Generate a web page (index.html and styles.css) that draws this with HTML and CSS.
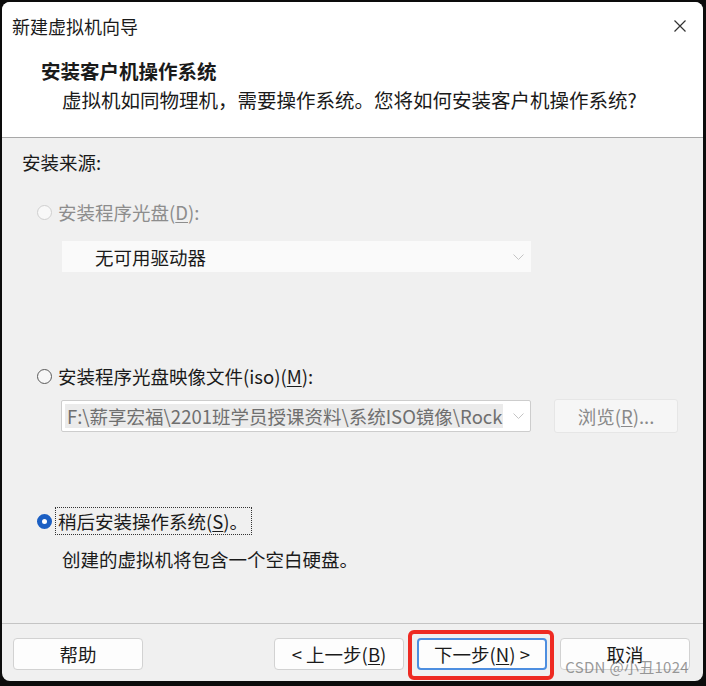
FILE: index.html
```html
<!DOCTYPE html>
<html lang="zh-CN">
<head>
  <meta charset="UTF-8">
  <title>新建虚拟机向导</title>
  <link rel="stylesheet" href="styles.css">
</head>
<body>
  <div class="window">
    <!-- Title bar -->
    <div class="titlebar">
      <span class="title">新建虚拟机向导</span>
      <svg class="close" width="12" height="12" viewBox="0 0 12 12">
        <path d="M0.5 0.5 L11.5 11.5 M11.5 0.5 L0.5 11.5" stroke="#333" stroke-width="1.2" fill="none"/>
      </svg>
    </div>

    <!-- Page header -->
    <div class="header">
      <div class="heading">安装客户机操作系统</div>
      <div class="subtitle">虚拟机如同物理机，需要操作系统。您将如何安装客户机操作系统?</div>
    </div>

    <!-- Options -->
    <div class="content">
      <div class="label">安装来源:</div>

      <div class="radio-row disabled row-disc">
        <span class="radio"></span>
        <span>安装程序光盘(<u>D</u>):</span>
      </div>
      <div class="select">
        <span>无可用驱动器</span>
        <svg width="11" height="6" viewBox="0 0 11 6"><path d="M0.5 0.5 L5.5 5.5 L10.5 0.5" stroke="#c4c4c4" fill="none"/></svg>
      </div>

      <div class="radio-row row-iso">
        <span class="radio"></span>
        <span>安装程序光盘映像文件(iso)(<u>M</u>):</span>
      </div>
      <div class="iso-row">
        <div class="combo">
          <span class="combo-text">F:\薪享宏福\2201班学员授课资料\系统ISO镜像\Rock</span>
          <svg width="11" height="6" viewBox="0 0 11 6"><path d="M0.5 0.5 L5.5 5.5 L10.5 0.5" stroke="#c4c4c4" fill="none"/></svg>
        </div>
        <div class="browse">浏览(<u>R</u>)...</div>
      </div>

      <div class="radio-row row-later">
        <span class="radio checked"></span>
        <span class="focus">稍后安装操作系统(<u>S</u>)。</span>
      </div>
      <div class="desc">创建的虚拟机将包含一个空白硬盘。</div>
    </div>

    <!-- Buttons -->
    <div class="footer">
      <div class="btn">帮助</div>
      <div class="nav">
        <div class="btn">&lt; 上一步(<u>B</u>)</div>
        <div class="btn primary">下一步(<u>N</u>) &gt;
          <span class="highlight"></span>
        </div>
        <div class="btn">取消</div>
      </div>
      <span class="watermark">CSDN @小丑1024</span>
    </div>
  </div>
</body>
</html>
```

FILE: styles.css
```css
html, body {
  margin: 0;
  padding: 0;
}

* {
  box-sizing: border-box;
}

body {
  background-color: #0c0c0c;
  width: 706px;
  height: 686px;
  overflow: hidden;
  font-family: "Noto Sans CJK SC", "Microsoft YaHei", sans-serif;
  font-size: 18.5px;
  line-height: 24px;
  color: #1a1a1a;
}

u {
  text-decoration: underline;
  text-underline-offset: 2px;
  text-decoration-thickness: 1px;
}

.window {
  margin: 2px 3px 0 2px;
  height: 679px;
  border-radius: 8px;
  background-color: #f0f0f0;
  overflow: hidden;
  display: flex;
  flex-direction: column;
}

/* Title bar */
.titlebar {
  height: 48px;
  background-color: #fff;
  display: flex;
  align-items: center;
  justify-content: space-between;
  padding: 0 17px 0 10px;
}
.title {
  font-size: 18px;
}

/* Header */
.header {
  height: 88px;
  background-color: #fff;
  border-bottom: 1px solid #a8a8a8;
  padding-top: 9px;
  font-size: 19.5px;
}
.heading {
  font-weight: bold;
  padding-left: 39px;
  height: 24px;
  margin-bottom: 5px;
}
.subtitle {
  padding-left: 60px;
}

/* Content */
.content {
  flex: 1;
  padding: 12px 0 0 20px;
}
.label {
  height: 24px;
}

.radio-row {
  display: flex;
  align-items: center;
  height: 24px;
  padding-left: 15px;
}
.radio-row.disabled {
  color: #8d8d8d;
}
.row-disc {
  margin-top: 26px;
}
.row-iso {
  margin-top: 92px;
}
.row-later {
  margin-top: 76px;
}

.radio {
  width: 15px;
  height: 15px;
  border-radius: 50%;
  border: 1px solid #5a5a5a;
  background-color: #f7f7f7;
  margin-right: 6px;
  flex-shrink: 0;
}
.disabled .radio {
  border-color: #cfcfcf;
  background-color: #f8f8f8;
}
.radio.checked {
  border: 5px solid #1b5fc3;
  background-color: #fff;
}

.focus {
  outline: 1px dotted #333;
  outline-offset: 1px;
  padding: 0 2px 0 1px;
  margin-left: -1px;
}

.select {
  margin: 17px 0 0 40px;
  width: 469px;
  height: 31px;
  background-color: #fafafa;
  display: flex;
  align-items: center;
  justify-content: space-between;
  padding: 0 7px 0 33px;
}

.iso-row {
  display: flex;
  align-items: center;
  margin: 11px 0 0 39px;
}
.combo {
  width: 470px;
  height: 32px;
  background-color: #fff;
  border: 1px solid #cdcdcd;
  border-radius: 2px;
  display: flex;
  align-items: center;
  justify-content: space-between;
  padding: 0 6px 0 3px;
}
.combo-text {
  width: 438px;
  overflow: hidden;
  white-space: nowrap;
  background-color: #ebebeb;
  color: #6f6f6f;
  padding-left: 2px;
}
.browse {
  margin-left: 23px;
  width: 124px;
  height: 34px;
  border: 1px solid #e6e6e6;
  border-radius: 3px;
  background-color: #f6f6f6;
  color: #8a8a8a;
  display: flex;
  align-items: center;
  justify-content: center;
}

.desc {
  margin-top: 14px;
  padding-left: 40px;
}

/* Footer */
.footer {
  position: relative;
  height: 58px;
  border-top: 1px solid #c4c4c4;
  display: flex;
  align-items: flex-start;
  justify-content: space-between;
  padding: 14px 13px 0 11px;
}
.nav {
  display: flex;
  gap: 13px;
}
.btn {
  position: relative;
  width: 130px;
  height: 32px;
  border: 1px solid #d2d2d2;
  border-radius: 4px;
  background-color: #fdfdfd;
  display: flex;
  align-items: center;
  justify-content: center;
}
.btn.primary {
  border: 2px solid #4d8ee0;
}
.highlight {
  position: absolute;
  left: -11px;
  right: -9px;
  top: -10px;
  bottom: -12px;
  border: 4px solid #ee2a22;
  border-radius: 6px;
}
.watermark {
  position: absolute;
  right: 14px;
  bottom: 2px;
  font-size: 15px;
  letter-spacing: 0.3px;
  color: rgba(120, 120, 120, 0.75);
}
```
